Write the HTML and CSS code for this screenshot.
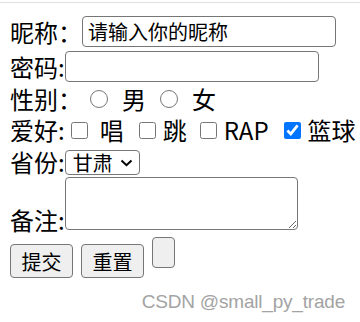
FILE: index.html
```html
<!DOCTYPE html>
<html lang="zh-CN">
<head>
    <meta charset="UTF-8">
    <meta name="viewport" content="width=device-width, initial-scale=1.0">
    <title>注册</title>
    <link rel="stylesheet" href="styles.css">
</head>
<body>

<div class="frame">
    <form class="form">
        <div class="row row-field">
            <span>昵称：</span><input type="text" class="field" value="请输入你的昵称">
        </div>
        <div class="row row-field">
            <span>密码:</span><input type="password" class="field">
        </div>
        <div class="row row-gender">
            <span>性别：</span>
            <input type="radio" name="sex" class="radio radio-first">
            <span>男</span>
            <input type="radio" name="sex" class="radio">
            <span>女</span>
        </div>
        <div class="row row-hobby">
            <span>爱好:</span>
            <input type="checkbox" class="check check-first">
            <span>唱</span>
            <input type="checkbox" class="check check-tight">
            <span>跳</span>
            <input type="checkbox" class="check check-mid">
            <span>RAP</span>
            <input type="checkbox" class="check check-wide" checked>
            <span>篮球</span>
        </div>
        <div class="row row-select">
            <span>省份:</span>
            <div class="select-wrap">
                <select class="province">
                    <option>甘肃</option>
                    <option>北京</option>
                    <option>上海</option>
                </select>
                <svg class="chevron" width="13" height="8" viewBox="0 0 13 8">
                    <path d="M1.5 1.5 L6.5 6.2 L11.5 1.5" fill="none" stroke="#000" stroke-width="2"/>
                </svg>
            </div>
        </div>
        <div class="row-note">
            <span>备注:</span><textarea class="note"></textarea>
        </div>
        <div class="row row-buttons">
            <button type="submit" class="btn">提交</button>
            <button type="reset" class="btn">重置</button>
            <button type="button" class="btn-empty"></button>
        </div>
    </form>
</div>

<div class="watermark">CSDN @small_py_trade</div>

</body>
</html>
```

FILE: styles.css
```css
body {
    margin: 0;
    padding-top: 2px;
    font-family: "Noto Sans CJK SC", sans-serif;
    font-size: 24px;
    line-height: 32px;
    color: #000;
    background-color: #fff;
    position: relative;
    height: 320px;
}

.frame {
    border-top: 1px solid #e0e0e0;
    padding: 11px 0 0 10px;
}

.row {
    display: flex;
    align-items: center;
    white-space: nowrap;
    line-height: 26px;
}

.row-field {
    height: 35px;
}

.field {
    box-sizing: border-box;
    width: 254px;
    height: 31px;
    margin: 0;
    padding: 1px 5px;
    font-family: "Noto Sans CJK SC", sans-serif;
    font-size: 20px;
    color: #000;
    border: 1px solid #767676;
    border-radius: 4px;
}

.row-gender {
    height: 30px;
}

.radio {
    width: 18px;
    height: 18px;
    margin: 0 14px;
}

.radio-first {
    margin-left: 8px;
}

.row-hobby {
    height: 32px;
}

.check {
    width: 17px;
    height: 17px;
    margin: 0 7px 0 15px;
}

.check-first {
    margin: 0 12px 0 6px;
}

.check-mid {
    margin-left: 13px;
}

.row-select {
    height: 31px;
}

.select-wrap {
    position: relative;
    display: flex;
    margin-top: 2px;
}

.province {
    appearance: none;
    box-sizing: border-box;
    width: 75px;
    height: 25px;
    margin: 0;
    padding: 0 0 0 7px;
    font-family: "Noto Sans CJK SC", sans-serif;
    font-size: 20px;
    line-height: 23px;
    color: #000;
    background-color: #fff;
    border: 1px solid #767676;
    border-radius: 4px;
}

.chevron {
    position: absolute;
    top: 9px;
    left: 55px;
    pointer-events: none;
}

.row-note {
    height: 60px;
    white-space: nowrap;
}

.note {
    box-sizing: border-box;
    width: 233px;
    height: 53px;
    margin: 0;
    border: 1px solid #767676;
    border-radius: 4px;
    font-size: 20px;
}

.row-buttons {
    align-items: flex-start;
    gap: 8px;
}

.btn {
    box-sizing: border-box;
    width: 63px;
    height: 34px;
    margin-top: 7px;
    padding: 0;
    font-family: "Noto Sans CJK SC", sans-serif;
    font-size: 20px;
    color: #000;
    background-color: #efefef;
    border: 1px solid #767676;
    border-radius: 4px;
}

.btn-empty {
    box-sizing: border-box;
    width: 23px;
    height: 31px;
    padding: 0;
    background-color: #efefef;
    border: 1px solid #767676;
    border-radius: 4px;
}

.watermark {
    position: absolute;
    top: 290px;
    right: 15px;
    font-family: "Liberation Sans", Arial, sans-serif;
    font-size: 19px;
    line-height: 24px;
    letter-spacing: -0.2px;
    color: #a3a3a3;
}
```
